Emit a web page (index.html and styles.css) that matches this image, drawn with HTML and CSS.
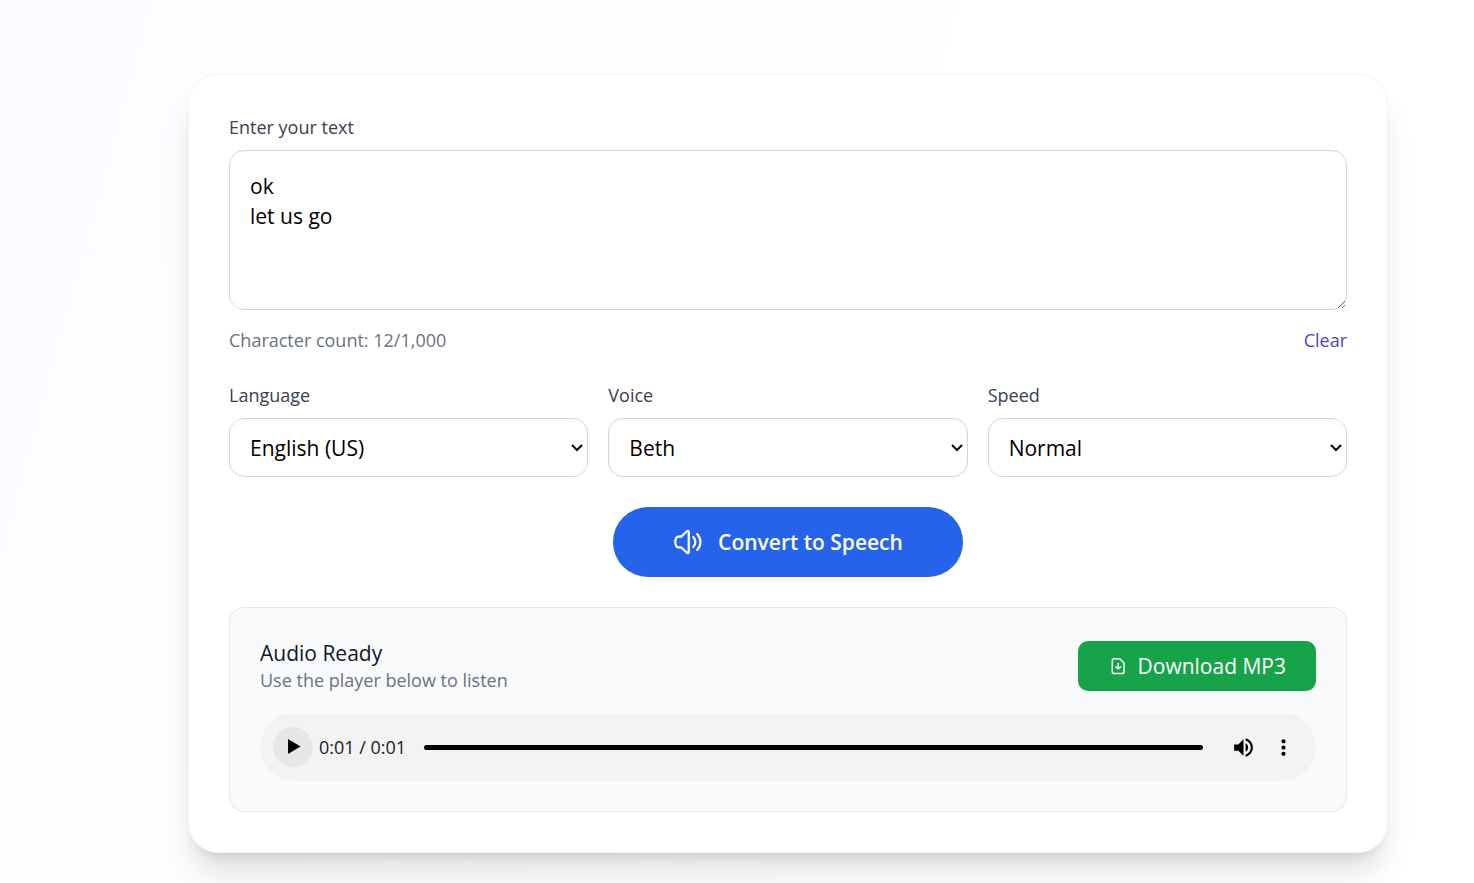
FILE: index.html
```html
<!DOCTYPE html>
<html lang="en">
  <head>
    <meta charset="UTF-8" />
    <meta name="viewport" content="width=device-width, initial-scale=1.0" />
    <title>Text to Speech</title>
    <link rel="stylesheet" href="styles.css">
  </head>
  <body>
    <main class="page">
      <form class="card">
        <label class="label" for="textInput">Enter your text</label>
        <textarea id="textInput" class="field text-input" maxlength="1000">ok
let us go</textarea>
        <div class="text-meta">
          <span>Character count: 12/1,000</span>
          <button type="button" class="clear-btn">Clear</button>
        </div>

        <div class="options">
          <div class="option">
            <label class="label" for="language">Language</label>
            <select id="language" class="field select">
              <option>English (US)</option>
            </select>
          </div>
          <div class="option">
            <label class="label" for="voice">Voice</label>
            <select id="voice" class="field select">
              <option>Beth</option>
            </select>
          </div>
          <div class="option">
            <label class="label" for="speed">Speed</label>
            <select id="speed" class="field select">
              <option>Normal</option>
            </select>
          </div>
        </div>

        <button type="button" class="convert-btn">
          <svg class="icon-lg" viewBox="0 0 24 24" fill="none" stroke="currentColor" stroke-width="1.8" stroke-linecap="round" stroke-linejoin="round" aria-hidden="true">
            <path d="M12.6 4v16c0 .8-.8 1.100-1.400.6L6.500 16.300H4.200c-.8 0-1.400-.4-1.600-1.100-.5-1.100-.8-2.100-.8-3.200s.3-2.100.8-3.200c.2-.7.8-1.100 1.600-1.100h2.300l4.700-4.300c.6-.5 1.400-.200 1.400.6z" />
            <path d="M16.200 8c2.200 2.200 2.200 5.800 0 8" />
            <path d="M19.300 5.600c3.500 3.600 3.500 9.200 0 12.800" />
          </svg>
          Convert to Speech
        </button>

        <section class="result">
          <div class="result-header">
            <div>
              <h2>Audio Ready</h2>
              <p>Use the player below to listen</p>
            </div>
            <button type="button" class="download-btn">
              <svg class="icon-sm" viewBox="0 0 20 20" fill="none" stroke="currentColor" stroke-width="1.500" stroke-linecap="round" stroke-linejoin="round" aria-hidden="true">
                <path d="M6 2.700h5.800l4.200 4.300v8.700c0 1-.8 1.800-1.800 1.800H6c-1 0-1.700-.8-1.700-1.800V4.500c0-1 .7-1.800 1.700-1.800z" />
                <path d="M10.200 7.500v5.300M7.900 10.800l2.300 2.200 2.300-2.200" />
              </svg>
              Download MP3
            </button>
          </div>

          <div class="player">
            <button type="button" class="play-btn" aria-label="Play">
              <svg viewBox="0 0 30 30" fill="currentColor" aria-hidden="true">
                <path d="M10 7v15l12.500-7.500z" />
              </svg>
            </button>
            <span class="time">0:01 / 0:01</span>
            <input type="range" class="timeline" aria-label="Playback position" min="0" max="1" value="1" />
            <button type="button" class="player-btn" aria-label="Mute">
              <svg viewBox="0 0 24 24" fill="currentColor" aria-hidden="true">
                <path d="M3 9v6h4l5 5V4L7 9H3zm13.500 3c0-1.770-1.020-3.290-2.500-4.030v8.050c1.480-.73 2.500-2.250 2.500-4.020zM14 3.230v2.060c2.890.86 5 3.540 5 6.710s-2.110 5.850-5 6.710v2.060c4.010-.91 7-4.490 7-8.770s-2.990-7.860-7-8.770z" />
              </svg>
            </button>
            <button type="button" class="player-btn" aria-label="More options">
              <svg viewBox="0 0 24 24" fill="currentColor" aria-hidden="true">
                <path d="M12 8c1.100 0 2-.9 2-2s-.9-2-2-2-2 .9-2 2 .9 2 2 2zm0 2c-1.100 0-2 .9-2 2s.9 2 2 2 2-.9 2-2-.9-2-2-2zm0 6c-1.100 0-2 .9-2 2s.9 2 2 2 2-.9 2-2-.9-2-2-2z" />
              </svg>
            </button>
          </div>
        </section>
      </form>
    </main>
  </body>
</html>
```
FILE: styles.css
```css
:root {
  --primary: #2563eb;
  --success: #16a34a;
  --link: #4f46b5;
  --text: #111827;
  --label: #374151;
  --muted: #6b7280;
  --border: #d1d5db;
  --panel: #f9fafb;
}

* {
  box-sizing: border-box;
}

body {
  margin: 0;
  min-height: 100vh;
  font-family: "Segoe UI", "Open Sans", "Noto Sans", sans-serif;
  font-size: 21px;
  line-height: 30px;
  color: var(--text);
  background: linear-gradient(105deg, #fafcff 0%, #ffffff 60%);
}

button,
select,
textarea {
  font: inherit;
}

button {
  padding: 0;
  border: none;
  background: none;
  cursor: pointer;
}

.page {
  padding: 74px 86px 30px 188px;
}

.card {
  padding: 40px;
  background: #ffffff;
  border: 1px solid #f3f4f6;
  border-radius: 30px;
  box-shadow: 0 25px 32px -6px rgba(0, 0, 0, 0.12),
    0 10px 12px -7px rgba(0, 0, 0, 0.1);
}

.label {
  display: block;
  margin-bottom: 10px;
  font-size: 18px;
  line-height: 25px;
  color: var(--label);
}

.field {
  display: block;
  width: 100%;
  border: 1px solid var(--border);
  border-radius: 15px;
  background: #ffffff;
  color: #000000;
}

.text-input {
  height: 160px;
  padding: 20px;
  resize: vertical;
}

.text-meta {
  display: flex;
  justify-content: space-between;
  margin: 18px 0 30px;
  font-size: 18px;
  line-height: 25px;
  color: var(--muted);
}

.clear-btn {
  color: var(--link);
}

.options {
  display: grid;
  grid-template-columns: repeat(3, 1fr);
  gap: 20px;
}

.select {
  height: 59px;
  padding: 0 20px;
  appearance: none;
  background: #ffffff
    url("data:image/svg+xml,%3Csvg xmlns='http://www.w3.org/2000/svg' width='12' height='8' fill='none' stroke='black' stroke-width='2'%3E%3Cpath d='M1 1l5 5 5-5'/%3E%3C/svg%3E")
    no-repeat right 4px center;
}

.convert-btn {
  display: flex;
  align-items: center;
  gap: 15px;
  margin: 30px auto;
  padding: 20px 60px;
  border-radius: 35px;
  background: var(--primary);
  color: #ffffff;
  font-weight: 600;
}

.icon-lg {
  width: 30px;
  height: 30px;
}

.icon-sm {
  width: 20px;
  height: 20px;
}

.result {
  padding: 30px;
  background: var(--panel);
  border: 1px solid #e5e7eb;
  border-radius: 15px;
}

.result-header {
  display: flex;
  align-items: center;
  justify-content: space-between;
  margin-bottom: 20px;
}

.result-header h2 {
  margin: 0;
  font-size: 21px;
  font-weight: 400;
}

.result-header p {
  margin: 0;
  font-size: 18px;
  line-height: 25px;
  color: var(--muted);
}

.download-btn {
  display: flex;
  align-items: center;
  gap: 10px;
  padding: 10px 30px;
  border-radius: 10px;
  background: var(--success);
  color: #ffffff;
}

.player {
  display: flex;
  align-items: center;
  height: 68px;
  padding: 0 13px;
  border-radius: 34px;
  background: #f1f3f4;
}

.play-btn {
  display: grid;
  place-items: center;
  width: 40px;
  height: 40px;
  border-radius: 50%;
  background: #e5e7e8;
  color: #000000;
}

.play-btn svg {
  width: 30px;
  height: 30px;
}

.time {
  margin-left: 6px;
  font-size: 18px;
  color: #202124;
}

.timeline {
  flex: 1;
  min-width: 0;
  height: 5px;
  margin: 0 20px 0 18px;
  appearance: none;
  border-radius: 3px;
  background: #000000;
}

.timeline::-webkit-slider-thumb {
  appearance: none;
  width: 0;
  height: 0;
}

.player-btn {
  display: grid;
  place-items: center;
  width: 40px;
  height: 40px;
  color: #000000;
}

.player-btn svg {
  width: 25px;
  height: 25px;
}

@media (max-width: 900px) {
  .page {
    padding: 30px 20px;
  }

  .options {
    grid-template-columns: 1fr;
  }
}
```
